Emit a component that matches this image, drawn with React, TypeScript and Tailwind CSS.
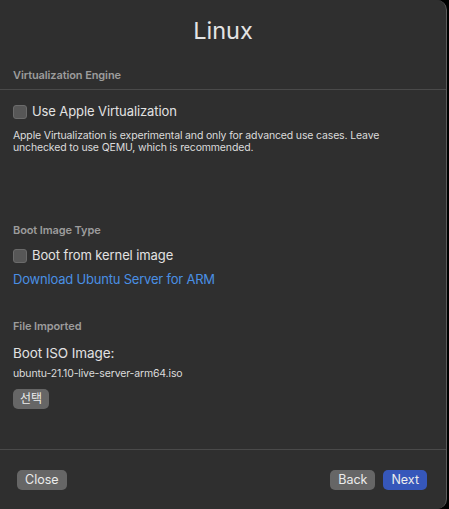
const font = { fontFamily: "Inter, 'Liberation Sans', 'Noto Sans CJK KR', sans-serif" };

const Checkbox = ({ label }: { label: string }) => (
  <label className="flex h-[20px] items-center gap-[5px] text-[13px] tracking-[-0.1px] text-[#e2e2e2]">
    <span className="h-[14px] w-[14px] rounded-[3px] border border-[#6b6b6b] bg-[#575757]" />
    {label}
  </label>
);

const SectionTitle = ({ children, className = "" }: { children: string; className?: string }) => (
  <div className={`flex h-[14px] items-center text-[11px] font-semibold tracking-[-0.1px] text-[#9c9c9c] ${className}`}>
    {children}
  </div>
);

const Button = ({ children, primary = false, className = "" }: { children: string; primary?: boolean; className?: string }) => (
  <button
    className={`h-[20px] rounded-[5px] px-[8px] text-[12.5px] leading-none text-[#ececec] ${
      primary ? "bg-[#3657ba]" : "bg-[#666666]"
    } ${className}`}
  >
    {children}
  </button>
);

export default function App() {
  return (
    <div className="h-[509px] w-[449px] bg-black" style={font}>
      <div className="flex h-full w-[447px] flex-col rounded-r-[10px] border-r border-[#5c5c5c] bg-[#2f2f2f]">
        <div className="flex h-[62px] items-center justify-center text-[23.5px] text-[#e4e4e4]">Linux</div>

        <div className="flex h-[28px] items-center border-b border-[#4a4a4a] px-[13px] pb-[1px] text-[11px] font-semibold tracking-[-0.1px] text-[#9c9c9c]">
          Virtualization Engine
        </div>

        <div className="px-[13px]">
          <div className="mt-[12px]">
            <Checkbox label="Use Apple Virtualization" />
          </div>
          <p className="mt-[8px] text-[10.5px] leading-[12px] tracking-[-0.15px] text-[#dcdcdc]">
            Apple Virtualization is experimental and only for advanced use cases. Leave
            <br />
            unchecked to use QEMU, which is recommended.
          </p>

          <SectionTitle className="mt-[69px]">Boot Image Type</SectionTitle>
          <div className="mt-[9px]">
            <Checkbox label="Boot from kernel image" />
          </div>
          <a className="mt-[5px] flex h-[18px] items-center text-[13px] tracking-[-0.2px] text-[#4a8fe4]">
            Download Ubuntu Server for ARM
          </a>

          <SectionTitle className="mt-[30px]">File Imported</SectionTitle>
          <div className="mt-[11px] flex h-[18px] items-center text-[13.5px] tracking-[-0.1px] text-[#e2e2e2]">
            Boot ISO Image:
          </div>
          <div className="mt-[5px] flex h-[14px] items-center text-[10.5px] tracking-[-0.15px] text-[#dcdcdc]">
            ubuntu-21.10-live-server-arm64.iso
          </div>
          <button className="mt-[8px] h-[20px] rounded-[5px] bg-[#666666] px-[7px] text-[12px] leading-none text-[#ececec]">
            선택
          </button>
        </div>

        <div className="flex-1" />

        <div className="flex h-[60px] items-start border-t border-[#4a4a4a] pl-[17px] pr-[19px] pt-[20px]">
          <Button>Close</Button>
          <div className="flex-1" />
          <Button className="mr-[8px]">Back</Button>
          <Button primary>Next</Button>
        </div>
      </div>
    </div>
  );
}
